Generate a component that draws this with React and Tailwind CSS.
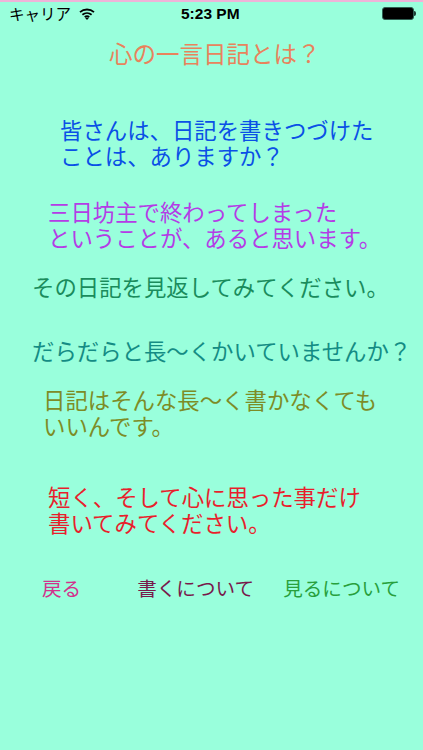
const jp = "font-['Noto_Sans_CJK_JP','Noto_Sans_CJK_SC',sans-serif]";

function StatusBar() {
  return (
    <div className="relative flex h-[23px] items-center justify-between pl-[9px] pr-[7px] text-black">
      <div className="flex items-center gap-[8px]">
        <span className={`${jp} w-[62px] text-[15.5px] leading-none`}>キャリア</span>
        <svg width="16" height="12" viewBox="0 0 16 12" fill="none" stroke="#000" strokeWidth="1.8">
          <path d="M1 4.2C5 .6 11 .6 15 4.2" />
          <path d="M3.4 6.8c2.7-2.3 6.5-2.3 9.2 0" />
          <path d="M5.7 9.1c1.4-1 3.2-1 4.6 0" />
          <path d="M8 12l-1.8-1.9c1.1-.6 2.5-.6 3.6 0z" fill="#000" stroke="none" />
        </svg>
      </div>
      <span className="absolute left-[181px] top-[2px] font-['Liberation_Sans',sans-serif] text-[15.5px] font-bold leading-[20px]">5:23 PM</span>
      <div className="flex items-center">
        <div className="h-[13px] w-[32px] rounded-[3px] border border-[#2f5f52] bg-black" />
        <div className="h-[5px] w-[2px] rounded-r-sm bg-[#1f3f36]" />
      </div>
    </div>
  );
}

function Para({ className, children }) {
  return <p className={`${jp} whitespace-nowrap text-[22.4px] font-normal leading-[26px] ${className}`}>{children}</p>;
}

export default function App() {
  return (
    <div className="h-[750px] w-[423px] overflow-hidden bg-[#99ffdc]">
      <div className="h-[2px] bg-[#eeb4d8]" />
      <StatusBar />
      <h1 className={`${jp} ml-[109px] mt-[14px] whitespace-nowrap text-[23.5px] font-normal leading-[28px] text-[#e8835c]`}>心の一言日記とは？</h1>
      <Para className="ml-[60px] mt-[49px] text-[#0a50e6]">
        皆さんは、日記を書きつづけた<br />ことは、ありますか？
      </Para>
      <Para className="ml-[48px] mt-[30px] text-[#b43ce6]">
        三日坊主で終わってしまった<br />ということが、あると思います。
      </Para>
      <Para className="ml-[32px] mt-[23px] text-[#1a8c5c]">その日記を見返してみてください。</Para>
      <Para className="ml-[32px] mt-[38px] text-[#148c84]">だらだらと長〜くかいていませんか？</Para>
      <Para className="ml-[43px] mt-[23px] text-[#7d8c26]">
        日記はそんな長〜く書かなくても<br />いいんです。
      </Para>
      <Para className="ml-[48px] mt-[45px] text-[#e81e2c]">
        短く、そして心に思った事だけ<br />書いてみてください。
      </Para>
      <div className={`${jp} ml-[42px] mt-[40px] flex whitespace-nowrap text-[19.6px] font-normal leading-[26px]`}>
        <span className="text-[#d2328c]">戻る</span>
        <span className="ml-[56px] text-[#78194b]">書くについて</span>
        <span className="ml-[29px] text-[#28a03c]">見るについて</span>
      </div>
    </div>
  );
}
